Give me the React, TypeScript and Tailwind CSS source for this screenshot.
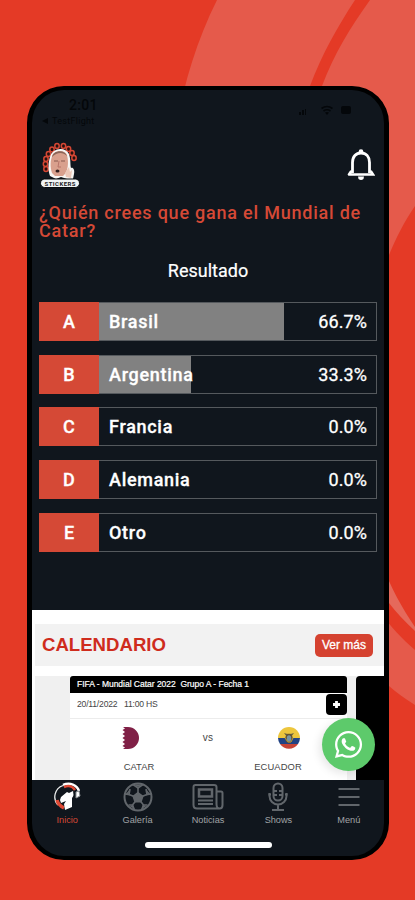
import type { ReactNode } from "react"
import { FaWhatsapp } from "react-icons/fa"

const options = [
    { letter: "A", name: "Brasil", percent: 66.7 },
    { letter: "B", name: "Argentina", percent: 33.3 },
    { letter: "C", name: "Francia", percent: 0 },
    { letter: "D", name: "Alemania", percent: 0 },
    { letter: "E", name: "Otro", percent: 0 },
]

function Backdrop() {
    return (
        <svg className="absolute inset-0" width="415" height="900" viewBox="0 0 415 900" aria-hidden="true">
            <path d="M217 0H355C338 26 322 54 310 86L300 120H178C184 83 197 40 217 0Z" fill="#e55a4b" />
            <path d="M370 0H415V206C404 222 396 238 389 255L370 300H300L322 86C334 54 350 28 370 0Z" fill="#e55a4b" />
            <path d="M380 560C391 588 402 608 415 627V631C405 622 396 612 389 603L380 592Z" fill="#e5695b" />
            <path d="M380 612C391 627 402 639 415 650V705C405 699 396 692 389 686L380 678Z" fill="#e55a4b" />
        </svg>
    )
}

function StatusBar() {
    return (
        <div className="flex h-[42px] justify-between pr-[33px] pl-[10px] text-[#04070a]">
            <div>
                <div className="mt-[7px] pl-[27px] text-[14px] leading-[17px] font-medium tracking-[0.3px]">2:01</div>
                <div className="mt-[2px] flex items-center gap-[4px] text-[9px] leading-[10px] tracking-[0.3px]">
                    <svg width="6" height="6" viewBox="0 0 6 6"><path d="M6 0V6L0 3Z" fill="currentColor" /></svg>
                    <span>TestFlight</span>
                </div>
            </div>
            <div className="mt-[14px] flex h-3 items-center">
                <svg width="54" height="12" viewBox="0 0 54 12" fill="currentColor">
                    <path d="M2 8h2v3H2zM5 6h2v5H5zM8 5h1v6H8z" />
                    <path d="M24.500 4.500Q30 0.500 35.500 4.500M26.500 7Q30 4.500 33.500 7" fill="none" stroke="currentColor" strokeWidth="1.600" />
                    <path d="M30 11L28 8.500Q30 7.500 32 8.500Z" />
                    <rect x="44" y="2" width="10" height="8" rx="2" />
                </svg>
            </div>
        </div>
    )
}

function StickersLogo() {
    const beads = [
        [6, 28], [5.5, 23], [6, 18], [8.5, 13], [12, 8.5], [17, 5], [23.5, 5], [28.5, 8], [32, 12], [34, 17],
    ]
    return (
        <svg width="41" height="48" viewBox="0 0 41 48">
            {beads.map(([x, y]) => (
                <ellipse key={`${x}-${y}`} cx={x} cy={y} rx="2.200" ry="2.500" fill="#25110f" stroke="#d54734" strokeWidth="1.500" />
            ))}
            <path d="M10 35C8 30 8 22 10 16C12 7 25 5 29 13C31 19 30 23 31 27C33 26 35 29 34 33L33 38H27L21 36L16 38Z" fill="#f8f5f2" />
            <path d="M12 32C10 26 10 19 13 13C17 9 25 9 27 14C29 22 28 31 23 35L15 35Z" fill="#d9a08d" />
            <path d="M12 16C13 9 25 8 27 15C23 11 17 11 12 16Z" fill="#8a6558" />
            <path d="M14 20h4M21 20h4" stroke="#8a5a50" strokeWidth="1.200" />
            <path d="M19 20L18 26H21" stroke="#b87469" fill="none" />
            <ellipse cx="17.500" cy="30" rx="2" ry="1.500" fill="#301d1d" />
            <path d="M25 32L29 26L30 31L32 29L31 37L26 36Z" fill="#ecc7b7" />
            <rect x="0.500" y="38" width="39" height="8.500" rx="4.200" fill="#f2f5f5" stroke="#080c0e" />
            <text x="20" y="44.500" textAnchor="middle" fontSize="6" fontWeight="700" textLength="31" fill="#1c2224" className="font-['Roboto',sans-serif]">STICKERS</text>
        </svg>
    )
}

function Bell() {
    return (
        <svg width="28" height="32" viewBox="0 0 28 32" fill="none" stroke="#fff">
            <path d="M5.500 24V13.500C5.500 7.500 9 4 14 4S22.500 7.500 22.500 13.500V24" strokeWidth="2.800" />
            <path d="M2 25.500H26L24 22.500M2 25.500L4 22.500" strokeWidth="2.600" strokeLinecap="round" />
            <circle cx="14" cy="2.500" r="2.300" fill="#fff" stroke="none" />
            <path d="M11 27.500H17L16.500 30Q14 32 11.500 30Z" fill="#fff" stroke="none" />
        </svg>
    )
}

function Option({ letter, name, percent }: { letter: string; name: string; percent: number }) {
    return (
        <div className="flex h-[39px] text-[18px] font-medium text-white">
            <div className="flex w-[60px] items-center justify-center bg-[#d54936] [-webkit-text-stroke:0.3px_white]">{letter}</div>
            <div className="relative flex flex-1 items-center justify-between border border-l-0 border-[#55595d] pr-[9px] pl-[10px]">
                <div className="absolute inset-y-0 left-0 bg-[#818181]" style={{ width: `${percent}%` }} />
                <span className="relative tracking-[0.7px] [-webkit-text-stroke:0.3px_white]">{name}</span>
                <span className="relative font-normal tracking-[0.1px] [-webkit-text-stroke:0.3px_white]">{percent.toFixed(1)}%</span>
            </div>
        </div>
    )
}

function QatarFlag() {
    return (
        <svg width="24" height="24" viewBox="0 0 24 24">
            <path d="M7 1H12A11 11 0 0 1 12 23H7L9 21.500L6.500 20L9 18L6.500 16L9 14L6.500 12L9 10L6.500 8L9 6L6.500 4L9 2.500Z" fill="#802046" />
        </svg>
    )
}

function EcuadorFlag() {
    return (
        <svg width="24" height="24" viewBox="0 0 24 24">
            <path d="M1 12A11 11 0 0 1 23 12Z" fill="#edc63d" />
            <path d="M1 12H23A11 11 0 0 1 21 18H3A11 11 0 0 1 1 12Z" fill="#224384" />
            <path d="M3 18H21A11 11 0 0 1 3 18Z" fill="#c74435" />
            <path d="M7 7Q12 9 17 7L14 11H10Z" fill="#645e42" />
            <ellipse cx="12" cy="12.500" rx="3" ry="4" fill="#7894a0" stroke="#66532d" strokeWidth="1.500" />
            <path d="M8 12L11 16H14L16 12" fill="none" stroke="#b59942" />
        </svg>
    )
}

function MatchCard() {
    return (
        <div className="h-full w-[277px] shrink-0 bg-white text-[#454545]">
            <div className="flex h-[17px] items-center rounded-t-[3px] bg-black pl-[7px] text-[8.5px] tracking-[-0.02px] whitespace-pre text-white [-webkit-text-stroke:0.2px_white]">FIFA - Mundial Catar 2022  Grupo A - Fecha 1</div>
            <div className="flex h-[26px] justify-between border-b border-[#ececec] pl-[7px]">
                <span className="text-[8.6px] leading-[23px] tracking-[-0.2px] whitespace-pre">20/11/2022   11:00 HS</span>
                <div className="mt-px flex h-[21px] w-[21px] items-center justify-center rounded-[4px] bg-black">
                    <svg width="9" height="9" viewBox="0 0 9 9"><path d="M4.500 1V8M1 4.500H8" stroke="white" strokeWidth="2.800" /></svg>
                </div>
            </div>
            <div className="flex items-start justify-between pt-[7px] pr-[44px] pl-[45px]">
                <div className="flex w-[48px] flex-col items-center">
                    <div className="mr-[23px]"><QatarFlag /></div>
                    <span className="mt-[11px] text-[9.4px] leading-[12px]">CATAR</span>
                </div>
                <span className="pt-[6px] text-[10px] leading-[12px] tracking-[0.3px]">vs</span>
                <div className="flex w-[50px] flex-col items-center">
                    <div className="ml-[22px]"><EcuadorFlag /></div>
                    <span className="mt-[11px] text-[9.4px] leading-[12px] tracking-[0.1px]">ECUADOR</span>
                </div>
            </div>
        </div>
    )
}

function HomeIcon() {
    return (
        <svg width="29" height="30" viewBox="0 0 29 30" fill="none">
            <path d="M10 3.500A12 12 0 0 0 5 23" stroke="#e9ebeb" strokeWidth="1.300" />
            <path d="M10 3C17 0 24 3 26 9" stroke="#fff" strokeWidth="2.500" />
            <path d="M11 5C16 3 20 5 22 8" stroke="#df4934" strokeWidth="2.500" />
            <path d="M4 18Q5 23 11 26" stroke="#df4934" strokeWidth="3.500" />
            <path d="M8 15L14 10L16 11L20 9L21 13L19 16V25L12 28L11 22L13 19L8 21L7 18Z" fill="#fff" />
            <path d="M23 10L26 9L27 14L23 16Z" fill="#fff" stroke="#8b9093" />
            <path d="M21 10V15" stroke="#10161d" />
        </svg>
    )
}

function BallIcon() {
    return (
        <svg width="30" height="30" viewBox="0 0 30 30" fill="none" stroke="#61666b" strokeWidth="2">
            <circle cx="15" cy="15" r="13.500" />
            <path d="M15 11L19.500 14.300L17.800 19.500H12.200L10.500 14.300Z" fill="#61666b" />
            <path d="M15 11V6M19.500 14.300L24 12.500M17.800 19.500L20.500 23M12.200 19.500L9.500 23M10.500 14.300L6 12.500" strokeWidth="1.600" />
            <path d="M10 2.500L15 6L20 2.500M28 12L24 12.500L23 7M24.500 23L20.500 23L18.500 28M11.500 28L9.500 23H5.500M2 12L6 12.500L7 7" strokeWidth="1.600" />
            <path d="M11 2.500L15 5L19 2.500ZM23 7L24.500 12L28 13ZM7 7L5.500 12L2 13ZM20 23L18.500 27L23.500 24ZM10 23L11.500 27L6.500 24Z" fill="#61666b" stroke="none" />
        </svg>
    )
}

function NewsIcon() {
    return (
        <svg width="32" height="28" viewBox="0 0 32 28" fill="none" stroke="#61666b" strokeWidth="2">
            <path d="M28 25.500H5Q1.500 25.500 1.500 22V4Q1.500 2 3.500 2H22Q24.500 2 24.500 4V21Q24.500 25.500 27.500 25.500T30.500 22V10Q30.500 8.500 29 8.500H25" />
            <rect x="7" y="6.500" width="13" height="7" strokeWidth="2.500" />
            <path d="M6 17.500H21M6 21H21" />
        </svg>
    )
}

function MicIcon() {
    return (
        <svg width="20" height="30" viewBox="0 0 20 30" fill="none" stroke="#61666b" strokeWidth="2">
            <rect x="5.500" y="1.500" width="9" height="17" rx="4.500" />
            <path d="M1.500 11V14A8.500 8.500 0 0 0 18.500 14V11M10 22.500V28M4 28H16M6 9H9M11 9H14M6 13H9M11 13H14" />
            <path d="M0.500 12.500H3M17 12.500H19.500" />
        </svg>
    )
}

function MenuIcon() {
    return (
        <svg width="22" height="22" viewBox="0 0 22 22" stroke="#61666b" strokeWidth="2">
            <path d="M0.500 3H21.500M0.500 11H21.500M0.500 19H21.500" />
        </svg>
    )
}

function NavItem({ label, active, children }: { label: string; active?: boolean; children: ReactNode }) {
    return (
        <button className={`flex flex-1 flex-col items-center text-[9.2px] leading-[12px] ${active ? "text-[#d54936]" : "text-[#a0a3a5]"}`}>
            <div className="flex h-[34px] items-center">{children}</div>
            <span>{label}</span>
        </button>
    )
}

export default function App() {
    return (
        <main className="relative flex h-[900px] w-[415px] overflow-hidden bg-[#e43a26] pt-[86px] pl-[27px] font-['Roboto',sans-serif]">
            <Backdrop />
            <div className="relative flex h-[774px] w-[362px] flex-col overflow-hidden rounded-[37px] border-x-5 border-y-4 border-black bg-[#10161d]">
                <StatusBar />
                <header className="flex justify-between pt-[9px] pr-[9px] pl-[8px]">
                    <StickersLogo />
                    <div className="pt-[8px]"><Bell /></div>
                </header>
                <section className="flex h-[331px] grow flex-col pr-[7px] pl-[7px]">
                    <h1 className="mt-[15px] text-[18px] leading-[18px] font-medium tracking-[0.78px] text-[#d54936]">
                        ¿Quién crees que gana el Mundial de Catar?
                    </h1>
                    <h2 className="mt-[20px] text-center text-[18px] leading-[22px] text-white [-webkit-text-stroke:0.2px_white]">Resultado</h2>
                    <div className="mt-[20px] flex flex-col gap-[13.7px]">
                        {options.map((option) => <Option key={option.letter} {...option} />)}
                    </div>
                </section>
                <section className="relative h-[170px] shrink-0 bg-white pt-[14px] pl-[3px] font-['Liberation_Sans',sans-serif]">
                    <div className="flex h-[42px] items-center justify-between bg-[#f2f2f2] pr-[11px] pl-[7px]">
                        <h2 className="text-[18.6px] font-bold text-[#cf2c1d]">CALENDARIO</h2>
                        <button className="h-[23px] w-[58px] rounded-[5px] bg-[#d54230] text-[12px] text-white [-webkit-text-stroke:0.3px_white]">Ver más</button>
                    </div>
                    <div className="mt-[10px] flex h-[104px] gap-[9px] overflow-hidden bg-[#f0f0f0] pl-[35px]">
                        <MatchCard />
                        <div className="w-[40px] shrink-0 rounded-tl-[4px] bg-black" />
                    </div>
                    <button className="absolute right-[9px] bottom-[9px] flex h-[53px] w-[53px] items-center justify-center rounded-full bg-[#5dca6b] text-white shadow-[-3px_3px_8px_#00000018]">
                        <FaWhatsapp size={31} />
                    </button>
                </section>
                <nav className="flex h-[76px] shrink-0 flex-col items-center font-['Liberation_Sans',sans-serif]">
                    <div className="flex w-full">
                        <NavItem label="Inicio" active><HomeIcon /></NavItem>
                        <NavItem label="Galería"><BallIcon /></NavItem>
                        <NavItem label="Noticias"><NewsIcon /></NavItem>
                        <NavItem label="Shows"><MicIcon /></NavItem>
                        <NavItem label="Menú"><MenuIcon /></NavItem>
                    </div>
                    <div className="mt-[16px] h-[6px] w-[127px] rounded-full bg-white" />
                </nav>
            </div>
        </main>
    )
}
